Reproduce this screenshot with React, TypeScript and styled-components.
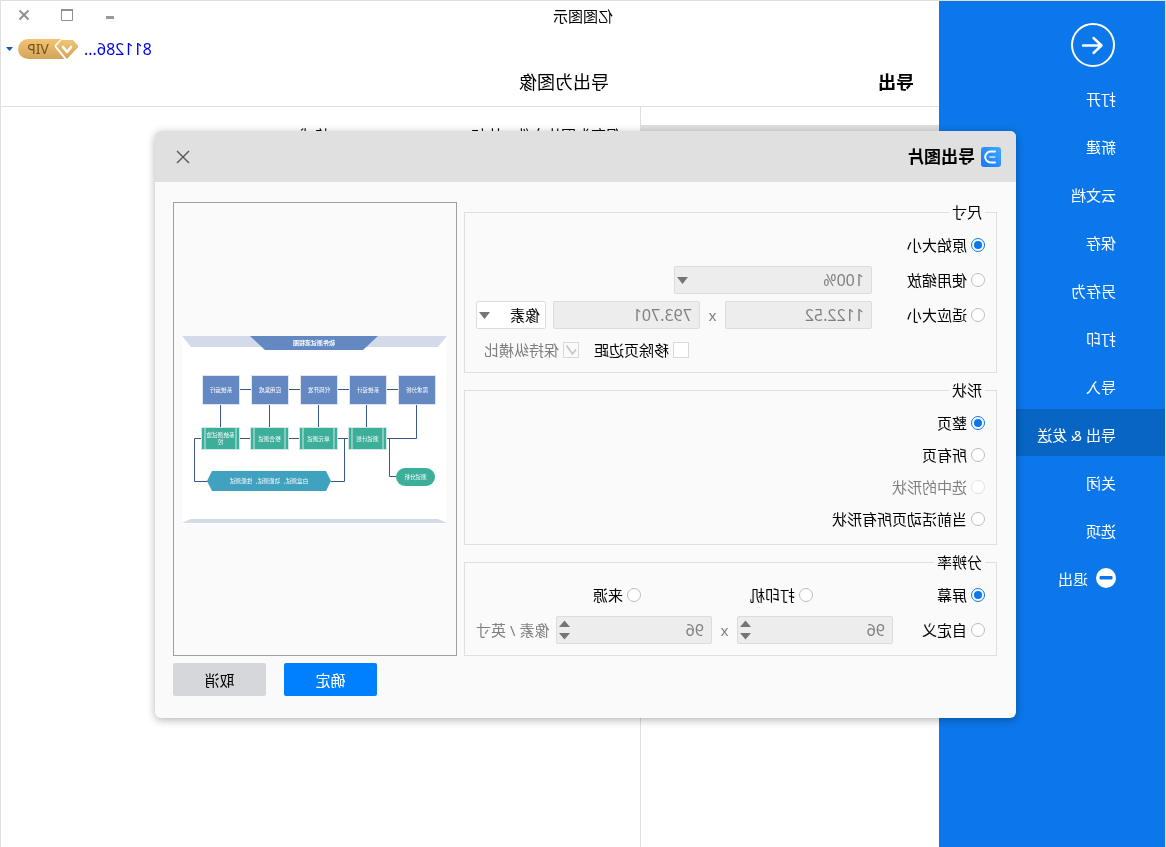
import React from "react";
import styled, { createGlobalStyle, css } from "styled-components";

const BLUE = "#0b77ea";
const LINE = "#dfdfdf";
const GREY_TEXT = "#808080";

const GlobalStyle = createGlobalStyle`
  * { box-sizing: border-box; }
  html, body { margin: 0; padding: 0; }
  body, button, input, select {
    font-family: "Noto Sans", "Noto Sans CJK SC", sans-serif;
    font-size: 15px;
    color: #000;
  }
  body { background: #fff; line-height: 20px; }
  button { border: 0; padding: 0; background: none; cursor: pointer; }
`;

/* The whole window is shown as a mirror image. */
const Window = styled.div`
  position: relative;
  display: flex;
  min-height: 100vh;
  border: 1px solid ${LINE};
  border-bottom: 0;
  overflow: hidden;
  transform: scaleX(-1);
`;

const Sidebar = styled.nav`
  flex: 0 0 226px;
  display: flex;
  flex-direction: column;
  background: ${BLUE};
`;

const BackButton = styled.button`
  align-self: flex-start;
  height: 46px;
  margin: 21px 0 5px 49px;
`;

const MenuList = styled.ul`
  list-style: none;
  margin: 0;
  padding: 0;
  display: flex;
  flex-direction: column;
  gap: 1px;
`;

const MenuItem = styled.button<{ $active?: boolean }>`
  display: flex;
  align-items: center;
  gap: 8px;
  width: 100%;
  height: 47px;
  padding: 3px 0 0 49px;
  color: #fff;
  text-align: left;
  background: ${(p) => (p.$active ? "#0865c4" : "transparent")};
`;

const Main = styled.div`
  flex: 1;
  min-width: 0;
  display: flex;
  flex-direction: column;
`;

const Header = styled.header`
  border-bottom: 1px solid ${LINE};
`;

const TitleBar = styled.div`
  display: flex;
  height: 32px;
`;

const AppTitle = styled.div`
  flex: 1;
  text-align: center;
  line-height: 30px;
`;

const WindowControls = styled.div`
  flex: 0 0 226px;
  display: flex;
  justify-content: flex-end;
  padding-right: 2px;
`;

const WindowButton = styled.button`
  width: 43px;
  height: 28px;
  display: grid;
  place-items: center;
`;

const AccountRow = styled.div`
  display: flex;
  align-items: center;
  justify-content: flex-end;
  height: 32px;
  padding-right: 5px;
`;

const AccountLink = styled.a`
  color: #0000f0;
  font-size: 16px;
  text-decoration: none;
  margin-right: 6px;
`;

const AccountMenu = styled.button`
  display: flex;
  align-items: center;
  gap: 5px;
`;

const Columns = styled.div`
  display: grid;
  grid-template-columns: 299px 1fr;
`;

const Headings = styled(Columns)`
  padding-bottom: 7px;
`;

const Heading = styled.h1<{ $strong?: boolean }>`
  margin: 0;
  padding-left: ${(p) => (p.$strong ? 25 : 31)}px;
  font-size: 18px;
  line-height: 34px;
  font-weight: ${(p) => (p.$strong ? 700 : 400)};
`;

const Content = styled(Columns)`
  flex: 1;
`;

const FormatList = styled.div`
  border-right: 1px solid ${LINE};
  padding-top: 18px;
`;

const FormatSelected = styled.div`
  height: 48px;
  background: ${LINE};
`;

const Description = styled.p`
  margin: 0;
  padding: 18px 20px 0 19px;
`;

const Overlay = styled.div`
  position: absolute;
  inset: 0;
  display: flex;
  align-items: center;
  justify-content: center;
  padding: 1px 5px 0 0;
`;

const Dialog = styled.form`
  width: 861px;
  border-radius: 6px;
  background: #fafafa;
  box-shadow: 0 2px 8px rgba(0, 0, 0, 0.3);
`;

const DialogHeader = styled.div`
  display: flex;
  align-items: center;
  gap: 6px;
  height: 51px;
  padding: 0 21px 0 15px;
  border-radius: 6px 6px 0 0;
  background: #e0e0e0;
`;

const DialogTitle = styled.h2`
  flex: 1;
  margin: 0;
  font-size: 17px;
  font-weight: 700;
`;

const CloseButton = styled.button`
  display: flex;
`;

const DialogBody = styled.div`
  display: grid;
  grid-template-columns: 1fr 284px;
  gap: 7px;
  padding: 20px 18px 22px 19px;
`;

const Groups = styled.div`
  display: flex;
  flex-direction: column;
  gap: 7px;
`;

const Group = styled.fieldset`
  min-width: 0;
  margin: 0;
  padding: 0 11px;
  border: 1px solid ${LINE};
`;

const Legend = styled.legend`
  padding: 0 3px;
  line-height: 20px;
`;

const Rows = styled.div<{ $gap: number; $bottom: number }>`
  display: flex;
  flex-direction: column;
  gap: ${(p) => p.$gap}px;
  padding: 9px 0 ${(p) => p.$bottom}px;
`;

const Row = styled.div`
  display: flex;
  align-items: center;
  height: 28px;
`;

const CheckRow = styled(Row)`
  justify-content: flex-end;
  gap: 15px;
  padding-right: 8px;
`;

const Choice = styled.label<{ $width?: number; $disabled?: boolean }>`
  flex: none;
  display: flex;
  align-items: center;
  gap: 4px;
  width: ${(p) => (p.$width ? `${p.$width}px` : "auto")};
  color: ${(p) => (p.$disabled ? GREY_TEXT : "#000")};
`;

const Radio = styled.input.attrs({ type: "radio" })`
  appearance: none;
  width: 14px;
  height: 14px;
  margin: 0;
  padding: 2px;
  border: 1px solid #bdbdbd;
  border-radius: 50%;
  background: #fff;

  &:checked {
    border-color: ${BLUE};
    background: ${BLUE} content-box;
  }
  &:disabled {
    border-color: #e2e2e2;
  }
`;

const CheckBoxWrap = styled.span`
  display: grid;
  width: 16px;
  height: 16px;

  > * { grid-area: 1 / 1; }
  svg { pointer-events: none; }
  input:not(:checked) + svg { visibility: hidden; }
`;

const CheckBoxInput = styled.input.attrs({ type: "checkbox" })`
  appearance: none;
  width: 16px;
  height: 16px;
  margin: 0;
  border: 1px solid #d9d9d9;
  background: #fff;

  &:disabled {
    background: #fafafa;
  }
`;

const fieldLook = css`
  height: 28px;
  border: 1px solid #dcdcdc;
  border-radius: 2px;
  background: #fff;
  margin: 0;

  &:disabled {
    background: #ededed;
    color: ${GREY_TEXT};
    opacity: 1;
  }
`;

const Field = styled.input<{ $width: number }>`
  ${fieldLook}
  width: ${(p) => p.$width}px;
  padding: 0 7px;
  font-size: 16px;
  appearance: textfield;

  &::-webkit-inner-spin-button { appearance: none; }
`;

const Select = styled.select<{ $width: number }>`
  ${fieldLook}
  appearance: none;
  width: ${(p) => p.$width}px;
  padding: 0 5px;

  &:disabled {
    padding: 0 7px;
    font-size: 16px;
  }
`;

const FieldWrap = styled.span`
  display: grid;
  align-items: center;

  > * { grid-area: 1 / 1; }
  > svg { justify-self: end; margin-right: 3px; pointer-events: none; }
`;

const Times = styled.span`
  width: 25px;
  text-align: center;
  color: ${GREY_TEXT};
`;

const Spacer = styled.span`
  flex: 1;
`;

const Unit = styled.span`
  color: ${GREY_TEXT};
`;

const Preview = styled.div`
  display: grid;
  place-items: center;
  padding-top: 2px;
  border: 1px solid #a0a0a0;
`;

const Footer = styled.div`
  grid-column: 1 / -1;
  display: flex;
  justify-content: flex-end;
  gap: 18px;
`;

const Action = styled.button<{ $primary?: boolean }>`
  width: 93px;
  height: 33px;
  border-radius: 2px;
  background: ${(p) => (p.$primary ? "#0080ff" : "#d5d7db")};
  color: ${(p) => (p.$primary ? "#fff" : "#000")};
`;

const Caret = () => (
  <svg width="11" height="7" viewBox="0 0 11 7" aria-hidden="true">
    <path d="M0 0H11L5.500 7Z" fill="#757575" />
  </svg>
);

const SpinArrows = () => (
  <svg width="11" height="20" viewBox="0 0 11 20" aria-hidden="true">
    <path d="M0 7H11L5.500 0.500ZM0 13H11L5.500 19.500Z" fill="#757575" />
  </svg>
);

const BackIcon = () => (
  <svg width="46" height="46" viewBox="0 0 46 46" fill="none" stroke="#fff" strokeWidth="2">
    <circle cx="23" cy="23" r="21" />
    <path d="M33 23.500H14.500M22.500 16L14.500 23.500L22.500 31" strokeWidth="2.400" strokeLinecap="round" strokeLinejoin="round" />
  </svg>
);

const ExitIcon = () => (
  <svg width="20" height="20" viewBox="0 0 20 20" aria-hidden="true">
    <circle cx="10" cy="10" r="10" fill="#fff" />
    <rect x="3.500" y="8" width="13" height="3.600" rx="1" fill={BLUE} />
  </svg>
);

const VipBadge = () => (
  <svg width="60" height="20" viewBox="0 0 60 20" role="img" aria-label="VIP">
    <defs>
      <linearGradient id="gold" x1="0" y1="0" x2="0" y2="1">
        <stop offset="0" stopColor="#f1c473" />
        <stop offset="1" stopColor="#d3a35b" />
      </linearGradient>
    </defs>
    <path d="M17 0H50a10 10 0 0 1 0 20H13.500L23.200 8.200V6Z" fill="url(#gold)" />
    <path d="M5 1H16.500L21.800 7L11 20L0 8.300V6.500Z" fill="url(#gold)" />
    <path d="M7 8L11 13L15 8" fill="none" stroke="#fff" strokeWidth="2.600" strokeLinecap="round" strokeLinejoin="round" />
    <text x="40" y="15" textAnchor="middle" fontSize="14" fill="#74511c">VIP</text>
  </svg>
);

const LogoIcon = () => (
  <svg width="20" height="20" viewBox="0 0 20 20" aria-hidden="true">
    <defs>
      <linearGradient id="logo" x1="0" y1="0" x2="1" y2="1">
        <stop offset="0" stopColor="#45a9ff" />
        <stop offset="1" stopColor="#1276fb" />
      </linearGradient>
    </defs>
    <rect width="20" height="20" rx="3" fill="url(#logo)" />
    <path d="M6 4.600H10.400a5.400 5.400 0 0 1 0 10.800H6" fill="none" stroke="#fff" strokeWidth="2" strokeLinecap="round" />
    <path d="M6.500 10H11" stroke="#a9d6ff" strokeWidth="2" strokeLinecap="round" />
  </svg>
);

const topBoxes = ["需求分析", "系统设计", "代码开发", "应用集成", "系统运行"];
const lowBoxes = [["测试计划"], ["单元测试"], ["整合测试"], ["系统测试监", "控"]];

const Diagram = () => (
  <svg width="264" height="188" viewBox="0 0 264 188" overflow="visible" textAnchor="middle" fontSize="5.600" fill="#fff">
    <rect x="1" width="264" height="188" fill="#fff" />
    <path d="M0 0H265L256 11H9Z" fill="#d3dbeb" />
    <path d="M69 0H197L182 14H84Z" fill="#6488c2" />
    <text x="133" y="9.300" fontSize="6" fontWeight="700">软件测试流程图</text>
    <path
      d="M49 53.500H208M80.500 69V91M128.500 69V91M177.500 69V91M226.500 69V91M30.500 69V102.500H252.500V145.500H239M57.500 102.500V140.500H51M102.500 102.500V145.500H116"
      fill="none"
      stroke="#3c5686"
    />
    {topBoxes.map((name, i) => (
      <g key={name}>
        <rect x={11.5 + i * 49} y="39.500" width="37" height="29" fill="#6488c2" stroke="#dfe6f2" />
        <text x={30 + i * 49} y="55.600">{name}</text>
      </g>
    ))}
    {lowBoxes.map((lines, i) => (
      <g key={lines[0]}>
        <rect x={60.5 + i * 49} y="91.500" width="38" height="22" fill="#3dae9a" stroke="#cfeae4" />
        <path d={`M${64 + i * 49} 92V113M${95 + i * 49} 92V113`} stroke="#cfeae4" />
        {lines.map((line, n) => (
          <text key={line} x={79.5 + i * 49} y={(lines.length > 1 ? 101 : 104.5) + n * 7}>{line}</text>
        ))}
      </g>
    ))}
    <rect x="12" y="132" width="39" height="18" rx="9" fill="#3dae9a" />
    <text x="31.500" y="142.500">测试分析</text>
    <path d="M121 135H235L240 145L235 155H121L116 145Z" fill="#40a2bf" />
    <text x="178" y="147.300">白盒测试、功能测试、性能测试</text>
    <path d="M9 183H256L265 187H0Z" fill="#d3dbeb" />
  </svg>
);

const menu = ["打开", "新建", "云文档", "保存", "另存为", "打印", "导入", "导出 & 发送", "关闭", "选项"];

type ChoiceProps = {
  name: string;
  label: string;
  width?: number;
  checked?: boolean;
  disabled?: boolean;
};

const RadioChoice = ({ name, label, width, checked, disabled }: ChoiceProps) => (
  <Choice $width={width} $disabled={disabled}>
    <Radio name={name} defaultChecked={checked} disabled={disabled} />
    {label}
  </Choice>
);

const CheckChoice = ({ name, label, checked, disabled }: ChoiceProps) => (
  <Choice $disabled={disabled}>
    <CheckBoxWrap>
      <CheckBoxInput name={name} defaultChecked={checked} disabled={disabled} />
      <svg width="16" height="16" viewBox="0 0 16 16" fill="none" stroke="#c4c4c4" strokeWidth="1.600">
        <path d="M3 7.500L6.500 12L12.500 3.500" />
      </svg>
    </CheckBoxWrap>
    {label}
  </Choice>
);

export default function App() {
  return (
    <>
      <GlobalStyle />
      <Window>
        <Sidebar>
          <BackButton aria-label="返回"><BackIcon /></BackButton>
          <MenuList>
            {menu.map((item) => (
              <li key={item}>
                <MenuItem $active={item === "导出 & 发送"}>{item}</MenuItem>
              </li>
            ))}
            <li>
              <MenuItem><ExitIcon />退出</MenuItem>
            </li>
          </MenuList>
        </Sidebar>

        <Main>
          <Header>
            <TitleBar>
              <AppTitle>亿图图示</AppTitle>
              <WindowControls>
                <WindowButton aria-label="最小化">
                  <svg width="12" height="12"><rect x="2" y="7" width="8" height="3" fill="#999" /></svg>
                </WindowButton>
                <WindowButton aria-label="最大化">
                  <svg width="12" height="12" fill="none" stroke="#909090">
                    <path d="M0.500 1V11.500H11.500V1" />
                    <path d="M0 1H12" strokeWidth="2" />
                  </svg>
                </WindowButton>
                <WindowButton aria-label="关闭窗口">
                  <svg width="12" height="12" fill="none" stroke="#909090" strokeWidth="2">
                    <path d="M1.500 1.500L10.500 10.500M10.500 1.500L1.500 10.500" />
                  </svg>
                </WindowButton>
              </WindowControls>
            </TitleBar>
            <AccountRow>
              <AccountLink href="#account">811286...</AccountLink>
              <AccountMenu aria-label="会员菜单">
                <VipBadge />
                <svg width="7" height="4"><path d="M0 0H7L3.500 4Z" fill="#0a5cb8" /></svg>
              </AccountMenu>
            </AccountRow>
            <Headings>
              <Heading $strong>导出</Heading>
              <Heading as="h2">导出为图像</Heading>
            </Headings>
          </Header>
          <Content>
            <FormatList><FormatSelected /></FormatList>
            <Description>保存为图片文件，比如BMP, JPEG, PNG, GIF格式</Description>
          </Content>
        </Main>

        <Overlay>
          <Dialog role="dialog" aria-labelledby="dialog-title" onSubmit={(e: React.FormEvent) => e.preventDefault()}>
            <DialogHeader>
              <LogoIcon />
              <DialogTitle id="dialog-title">导出图片</DialogTitle>
              <CloseButton type="button" aria-label="关闭">
                <svg width="14" height="14" fill="none" stroke="#555" strokeWidth="1.400">
                  <path d="M1 1L13 13M13 1L1 13" />
                </svg>
              </CloseButton>
            </DialogHeader>

            <DialogBody>
              <Groups>
                <Group>
                  <Legend>尺寸</Legend>
                  <Rows $gap={7} $bottom={8}>
                    <Row><RadioChoice name="size" label="原始大小" checked /></Row>
                    <Row>
                      <RadioChoice name="size" label="使用缩放" width={113} />
                      <FieldWrap>
                        <Select $width={198} aria-label="缩放比例" disabled><option>100%</option></Select>
                        <Caret />
                      </FieldWrap>
                    </Row>
                    <Row>
                      <RadioChoice name="size" label="适应大小" width={113} />
                      <Field $width={147} aria-label="宽度" defaultValue="1122.52" disabled />
                      <Times>x</Times>
                      <Field $width={147} aria-label="高度" defaultValue="793.701" disabled />
                      <Spacer />
                      <FieldWrap>
                        <Select $width={70} aria-label="单位"><option>像素</option></Select>
                        <Caret />
                      </FieldWrap>
                    </Row>
                    <CheckRow>
                      <CheckChoice name="margin" label="移除页边距" />
                      <CheckChoice name="ratio" label="保持纵横比" checked disabled />
                    </CheckRow>
                  </Rows>
                </Group>

                <Group>
                  <Legend>形状</Legend>
                  <Rows $gap={4} $bottom={11}>
                    <Row><RadioChoice name="shape" label="整页" checked /></Row>
                    <Row><RadioChoice name="shape" label="所有页" /></Row>
                    <Row><RadioChoice name="shape" label="选中的形状" disabled /></Row>
                    <Row><RadioChoice name="shape" label="当前活动页所有形状" /></Row>
                  </Rows>
                </Group>

                <Group>
                  <Legend>分辨率</Legend>
                  <Rows $gap={7} $bottom={11}>
                    <Row>
                      <RadioChoice name="resolution" label="屏幕" width={172} checked />
                      <RadioChoice name="resolution" label="打印机" width={172} />
                      <RadioChoice name="resolution" label="来源" />
                    </Row>
                    <Row>
                      <RadioChoice name="resolution" label="自定义" width={92} />
                      <FieldWrap>
                        <Field $width={156} type="number" aria-label="水平分辨率" defaultValue={96} disabled />
                        <SpinArrows />
                      </FieldWrap>
                      <Times>x</Times>
                      <FieldWrap>
                        <Field $width={156} type="number" aria-label="垂直分辨率" defaultValue={96} disabled />
                        <SpinArrows />
                      </FieldWrap>
                      <Spacer />
                      <Unit>像素 / 英寸</Unit>
                    </Row>
                  </Rows>
                </Group>
              </Groups>

              <Preview><Diagram /></Preview>

              <Footer>
                <Action $primary type="submit">确定</Action>
                <Action type="button">取消</Action>
              </Footer>
            </DialogBody>
          </Dialog>
        </Overlay>
      </Window>
    </>
  );
}
